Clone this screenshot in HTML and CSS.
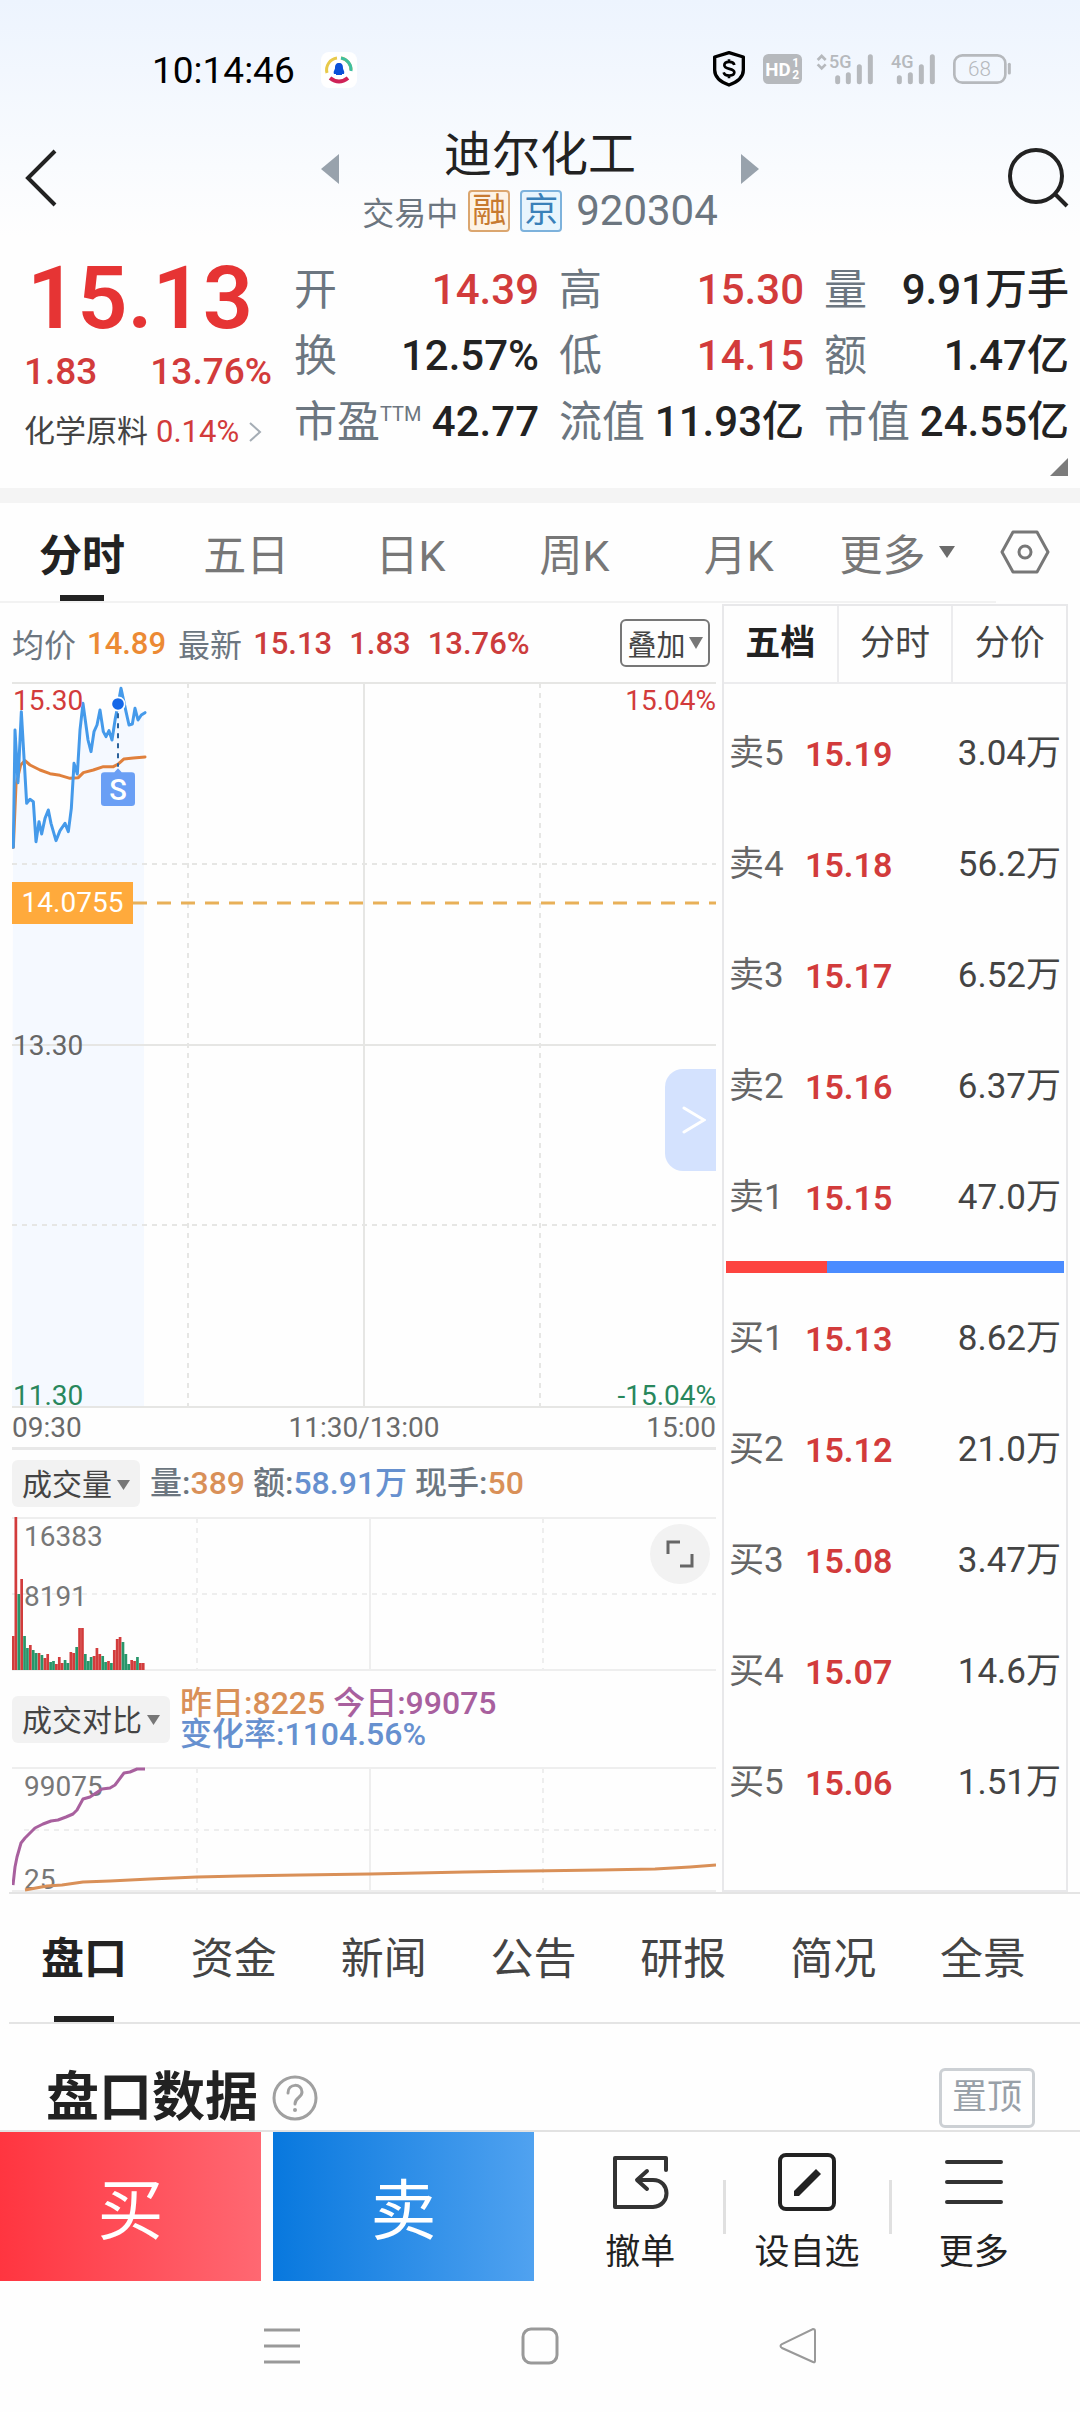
FILE: index.html
```html
<!DOCTYPE html>
<html lang="zh-CN">
<head>
<meta charset="utf-8">
<meta name="viewport" content="width=device-width">
<title>迪尔化工 920304</title>
<link rel="stylesheet" href="styles.css">
</head>
<body>
<div class="top">
  <div class="status">
    <span class="clock">10:14:46</span>
    <svg class="app-dot" viewBox="0 0 36 36" width="36" height="36">
      <rect width="36" height="36" rx="8" fill="#fff"/>
      <path d="M6 21A12 12 0 0 1 16 6M20 6A12 12 0 0 1 30 18" fill="none" stroke="#e8c94a" stroke-width="3"/>
      <path d="M20 6A12 12 0 0 1 30 19" fill="none" stroke="#3fbf9f" stroke-width="3"/>
      <path d="M9 26Q18 33 27 26" fill="none" stroke="#cf2257" stroke-width="4"/>
      <path d="M18 11c3 0 4 2 4 5c0 2 2 3 1 6h-2v1h-6v-1h-2c-1-3 1-4 1-6c0-3 1-5 4-5z" fill="#0a50d8"/>
    </svg>
    <svg class="signals" viewBox="0 0 990 180" width="330" height="60">
      <path d="M117 38L160 51V90C160 112 142 126 117 135C92 126 74 112 74 90V51Z" fill="none" stroke="#000" stroke-width="10" stroke-linejoin="round"/>
      <path d="M133 75C130 62 103 63 103 76C103 90 133 83 133 97C133 110 104 110 101 97M117 58V67M117 106V115" fill="none" stroke="#000" stroke-width="8"/>
      <rect x="219" y="42" width="117" height="90" rx="16" fill="#b6b9bd"/>
      <text x="226" y="108" class="hd">HD</text>
      <text x="307" y="80" class="hd-n">1</text>
      <text x="307" y="118" class="hd-n">2</text>
      <path d="M383 60L395 48L407 60M383 73L395 85L407 73" fill="none" stroke="#b6b9bd" stroke-width="8"/>
      <text x="417" y="85" class="net">5G</text>
      <text x="603" y="85" class="net">4G</text>
      <g stroke="#b6b9bd" stroke-width="15" stroke-linecap="round">
        <path d="M443 113V125M475 104V125M508 80V125M541 50V125M628 113V125M661 104V125M694 80V125M727 50V125"/>
      </g>
      <rect x="793" y="46" width="153" height="82" rx="24" fill="none" stroke="#b6b9bd" stroke-width="8"/>
      <path d="M958 73V99" stroke="#b6b9bd" stroke-width="9" stroke-linecap="round"/>
      <text x="834" y="107" class="bat">68</text>
    </svg>
  </div>
  <header class="head">
    <button class="icon-btn" aria-label="返回"><svg viewBox="0 0 34 60" width="34" height="60"><path d="M31 3L4 30L31 57" fill="none" stroke="#222" stroke-width="4"/></svg></button>
    <div class="switcher">
      <button class="icon-btn" aria-label="上一只"><svg viewBox="0 0 18 30" width="18" height="30"><path d="M18 0V30L0 15Z" fill="#98a2ac"/></svg></button>
      <div class="names">
        <h1>迪尔化工</h1>
        <div class="sub"><span class="state">交易中</span><span class="badge rong">融</span><span class="badge jing">京</span><span class="code">920304</span></div>
      </div>
      <button class="icon-btn" aria-label="下一只"><svg viewBox="0 0 18 30" width="18" height="30"><path d="M0 0V30L18 15Z" fill="#98a2ac"/></svg></button>
    </div>
    <button class="icon-btn" aria-label="搜索"><svg viewBox="0 0 62 60" width="62" height="60"><circle cx="28" cy="28" r="26" fill="none" stroke="#222" stroke-width="4"/><path d="M47 46L59 58" stroke="#222" stroke-width="4"/></svg></button>
  </header>
</div>

<section class="quote">
  <div class="last">
    <div class="price">15.13</div>
    <div class="change"><span>1.83</span><span>13.76%</span></div>
    <a class="sector" href="#sector">化学原料 <span class="up">0.14%</span><svg viewBox="0 0 16 20" width="16" height="20"><path d="M3 1L13 10L3 19" fill="none" stroke="#a5adb5" stroke-width="2"/></svg></a>
  </div>
  <dl class="stats">
    <div><dt>开</dt><dd class="up">14.39</dd></div>
    <div><dt>高</dt><dd class="up">15.30</dd></div>
    <div><dt>量</dt><dd>9.91万手</dd></div>
    <div><dt>换</dt><dd>12.57%</dd></div>
    <div><dt>低</dt><dd class="up">14.15</dd></div>
    <div><dt>额</dt><dd>1.47亿</dd></div>
    <div><dt>市盈<sup>TTM</sup></dt><dd>42.77</dd></div>
    <div><dt>流值</dt><dd>11.93亿</dd></div>
    <div><dt>市值</dt><dd>24.55亿</dd></div>
  </dl>
  <svg class="fold" viewBox="0 0 18 18" width="18" height="18"><path d="M18 0V18H0Z" fill="#7b7b7b"/></svg>
</section>

<nav class="periods">
  <button class="on">分时</button><button>五日</button><button>日K</button><button>周K</button><button>月K</button>
  <button class="more">更多<svg viewBox="0 0 16 12" width="16" height="12"><path d="M0 0H16L8 12Z" fill="#6b6b6b"/></svg></button>
  <button class="gear" aria-label="设置"><svg viewBox="0 0 50 44" width="50" height="44"><path d="M13 2H37L48 22L37 42H13L2 22Z" fill="none" stroke="#777" stroke-width="3" stroke-linejoin="round"/><circle cx="25" cy="22" r="6" fill="none" stroke="#777" stroke-width="3"/></svg></button>
</nav>

<main class="board">
  <div class="charts">
    <div class="info">
      <span class="lbl">均价</span><span class="num avg">14.89</span><span class="lbl">最新</span><span class="num">15.13</span><span class="num">1.83</span><span class="num">13.76%</span>
      <button class="overlay">叠加<svg viewBox="0 0 14 12" width="14" height="12"><path d="M0 0H14L7 12Z" fill="#777"/></svg></button>
    </div>
    <div class="plot">
      <svg viewBox="0 0 704 726">
        <path d="M1 165L3 48L6 101L9 30L15 121L21 120L24 160L30 140L36 128L44 158L53 142L57 148L62 82L66 92L71 21L76 60L79 69L88 28L94 55L100 58L104 36L109 6L114 30L120 42L125 26L132 30V725H0Z" fill="#f5f9ff"/>
        <g stroke="#e6e6e4" stroke-width="2" fill="none">
          <path d="M0 1H704M0 363H704M0 725H704M352 1V725"/>
          <path d="M0 182H704M0 543H704M176 1V725M528 1V725" stroke-dasharray="5 5"/>
        </g>
        <path d="M121 221H704" stroke="#e8b058" stroke-width="3" stroke-dasharray="14 10"/>
        <g transform="translate(-12 -12) scale(.33333)" fill="none" stroke-width="9" stroke-linejoin="round" stroke-linecap="round">
          <path stroke="#e0803c" d="M40 532L48 345L62 285L75 272L90 285L120 300L150 311L180 316L210 325L235 323L250 308L280 300L310 290L340 290L355 282L372 267L400 264L435 261"/>
          <path stroke="#459aea" d="M40 532L45 180L54 338L64 125L80 400L90 388L100 395L108 515L117 455L125 492L135 445L145 420L153 460L168 512L180 482L195 460L205 485L214 415L222 280L232 312L240 180L249 100L264 210L273 245L282 185L291 165L300 120L310 185L318 200L327 182L336 210L346 145L354 105L363 55L378 125L387 165L397 162L405 115L414 150L424 135L435 128"/>
          <path d="M354 130V290" stroke="#2a629c" stroke-width="6" stroke-dasharray="15 15" stroke-linecap="butt"/>
          <circle cx="354" cy="102" r="20" fill="#1668e8" stroke="#fff" stroke-width="5"/>
          <path d="M343 307L354 295L365 307H395Q405 307 405 317V398Q405 408 395 408H313Q303 408 303 398V317Q303 307 313 307Z" fill="#6a9ff5" stroke="none"/>
        </g>
        <text x="106" y="118" class="mark">S</text>
      </svg>
      <span class="ax tl up">15.30</span>
      <span class="ax tr up">15.04%</span>
      <span class="ax base">14.0755</span>
      <span class="ax mid">13.30</span>
      <span class="ax bl down">11.30</span>
      <span class="ax br down">-15.04%</span>
      <button class="drawer" aria-label="收起"><svg viewBox="0 0 24 30" width="24" height="30"><path d="M2 3L22 15L2 27" fill="none" stroke="#fff" stroke-width="3" stroke-linecap="round"/></svg></button>
    </div>
    <div class="times"><span>09:30</span><span>11:30/13:00</span><span>15:00</span></div>
    <div class="ind">
      <button class="pick">成交量<svg viewBox="0 0 13 10" width="13" height="10"><path d="M0 0H13L6.500 10Z" fill="#777"/></svg></button>
      <p>量:<b class="o">389</b> 额:<b class="b">58.91万</b> 现手:<b class="o">50</b></p>
    </div>
    <div class="plot">
      <svg viewBox="0 0 704 154">
        <g stroke="#eeeeee" stroke-width="2" fill="none">
          <path d="M0 1H704M0 153H704M358 1V153"/>
          <path d="M0 77H704M185 1V153M531 1V153" stroke-dasharray="5 5"/>
        </g>
        <g stroke-width="2.800" transform="scale(.965 1)">
          <path stroke="#d23c3c" d="M1 153v-34M4 153V0M10 153v-91M19 153v-25M28 153v-17M34 153v-12M37 153v-16M46 153v-6M49 153v-13M52 153v-7M61 153v-18M64 153v-17M70 153v-42M73 153v-42M85 153v-14M88 153v-22M91 153v-16M100 153v-9M106 153v-20M109 153v-31M112 153v-33M124 153v-10M127 153v-9M133 153v-7M136 153v-7"/>
          <path stroke="#28966a" d="M7 153v-76M13 153v-34M16 153v-22M22 153v-20M25 153v-17M31 153v-15M40 153v-8M43 153v-9M55 153v-10M58 153v-7M67 153v-23M76 153v-16M79 153v-9M82 153v-13M94 153v-14M97 153v-8M103 153v-7M115 153v-28M118 153v-16M121 153v-6M130 153v-13"/>
        </g>
      </svg>
      <span class="ax v1">16383</span>
      <span class="ax v2">8191</span>
      <button class="expand" aria-label="全屏"><svg viewBox="0 0 28 28" width="28" height="28"><path d="M2 14V2H14M26 14V26H14" fill="none" stroke="#666" stroke-width="3"/></svg></button>
    </div>
    <div class="ind cmp">
      <button class="pick">成交对比<svg viewBox="0 0 13 10" width="13" height="10"><path d="M0 0H13L6.500 10Z" fill="#777"/></svg></button>
      <p><b class="o">昨日:8225</b> <b class="p">今日:99075</b><br><b class="b">变化率:1104.56%</b></p>
    </div>
    <div class="plot">
      <span class="ax c1">99075</span>
      <span class="ax c2">25</span>
      <svg class="over" viewBox="0 0 704 125">
        <g stroke="#eeeeee" stroke-width="2" fill="none">
          <path d="M0 1H704M0 124H704M358 1V124"/>
          <path d="M12 63H704M185 1V124M531 1V124" stroke-dasharray="5 5"/>
        </g>
        <g fill="none" stroke-width="3" stroke-linejoin="round">
          <path stroke="#a8609e" d="M1 118L3 100L5 90L9 76L13 71L23 61L31 57L39 54L46 53L54 50L61 47L65 43L71 32L78 30L90 22L98 21L103 18L112 6L118 5L125 2H133"/>
          <path stroke="#d99058" d="M13 123L35 119L50 118L71 115L98 114L138 112L185 110L228 109L288 108L358 107L453 105L518 104L588 103L643 102L678 100L704 98"/>
        </g>
      </svg>
    </div>
  </div>

  <aside class="book">
    <div class="book-tabs"><button class="on">五档</button><button>分时</button><button>分价</button></div>
    <table>
      <tr><th>卖5</th><td class="px">15.19</td><td>3.04万</td></tr>
      <tr><th>卖4</th><td class="px">15.18</td><td>56.2万</td></tr>
      <tr><th>卖3</th><td class="px">15.17</td><td>6.52万</td></tr>
      <tr><th>卖2</th><td class="px">15.16</td><td>6.37万</td></tr>
      <tr><th>卖1</th><td class="px">15.15</td><td>47.0万</td></tr>
    </table>
    <div class="ratio"><i style="width:30%"></i></div>
    <table>
      <tr><th>买1</th><td class="px">15.13</td><td>8.62万</td></tr>
      <tr><th>买2</th><td class="px">15.12</td><td>21.0万</td></tr>
      <tr><th>买3</th><td class="px">15.08</td><td>3.47万</td></tr>
      <tr><th>买4</th><td class="px">15.07</td><td>14.6万</td></tr>
      <tr><th>买5</th><td class="px">15.06</td><td>1.51万</td></tr>
    </table>
  </aside>
</main>

<nav class="sections">
  <button class="on">盘口</button><button>资金</button><button>新闻</button><button>公告</button><button>研报</button><button>简况</button><button>全景</button>
</nav>

<section class="data">
  <h2>盘口数据</h2>
  <button class="icon-btn" aria-label="说明"><svg viewBox="0 0 46 46" width="46" height="46"><circle cx="23" cy="23" r="21" fill="none" stroke="#a0a0a0" stroke-width="3"/><path d="M16 18C16 8 30 8 30 17C30 23 23 22 23 29" fill="none" stroke="#a0a0a0" stroke-width="3" stroke-linecap="round"/><circle cx="23" cy="35" r="2" fill="#a0a0a0"/></svg></button>
  <button class="pin">置顶</button>
</section>

<footer class="trade">
  <button class="buy">买</button>
  <button class="sell">卖</button>
  <div class="tools">
    <button><svg viewBox="0 0 60 60" width="60" height="60"><path d="M56 18V6H5V55H43C61 54 61 28 43 28H28M37 19L27 28L37 37" fill="none" stroke="#333" stroke-width="4" stroke-linecap="round" stroke-linejoin="round"/></svg>撤单</button>
    <button><svg viewBox="0 0 60 60" width="60" height="60"><rect x="3" y="3" width="54" height="54" rx="6" fill="none" stroke="#222" stroke-width="4"/><path d="M17 39L39 17L44 22L22 44H17Z" fill="#222"/></svg>设自选</button>
    <button><svg viewBox="0 0 60 60" width="60" height="60"><path d="M3 10H57M3 30H57M3 50H57" stroke="#333" stroke-width="4" stroke-linecap="round"/></svg>更多</button>
  </div>
</footer>

<div class="sysnav">
  <button class="icon-btn" aria-label="任务"><svg viewBox="0 0 38 38" width="38" height="38"><path d="M1 3H37M1 19H37M1 35H37" stroke="#999" stroke-width="3"/></svg></button>
  <button class="icon-btn" aria-label="主页"><svg viewBox="0 0 38 38" width="38" height="38"><rect x="2" y="2" width="34" height="34" rx="8" fill="none" stroke="#999" stroke-width="3"/></svg></button>
  <button class="icon-btn" aria-label="后退"><svg viewBox="0 0 38 38" width="38" height="38"><path d="M34 2Q36 2 36 4V34Q36 36 34 35L3 21Q0 19 3 17Z" fill="none" stroke="#999" stroke-width="2"/></svg></button>
</div>
</body>
</html>
```
FILE: styles.css
```css
* { box-sizing: border-box; }
body {
  margin: 0;
  background: #fefefe;
  color: #222;
  font-family: Roboto, "Noto Sans CJK SC", sans-serif;
}
button {
  margin: 0;
  padding: 0;
  border: 0;
  background: none;
  color: inherit;
  font: inherit;
}
svg { display: block; flex: none; }
h1, h2, p, dl, dd { margin: 0; }
.up { color: #d23b3b; }
.down { color: #28875c; }

.top { background: linear-gradient(#edf4fe, #fefefe); }
.status {
  display: flex;
  align-items: center;
  height: 110px;
  padding: 30px 60px 0 152px;
}
.clock { font-size: 37px; color: #000; }
.app-dot { margin-left: 26px; }
.signals { margin-left: auto; }
.hd { font: 700 56px Roboto, sans-serif; fill: #fff; }
.hd-n { font: 700 36px Roboto, sans-serif; fill: #fff; }
.net { font: 500 54px Roboto, sans-serif; fill: #b6b9bd; }
.bat { font: 300 62px Roboto, sans-serif; fill: #b6b9bd; }

.head {
  display: flex;
  align-items: center;
  justify-content: space-between;
  height: 127px;
  padding: 8px 10px 0 24px;
}
.switcher {
  display: flex;
  align-items: center;
  justify-content: space-between;
  width: 452px;
  padding: 6px 0 0 14px;
}
.switcher .icon-btn { padding-bottom: 24px; }
.names { text-align: center; }
h1 { font-size: 48px; line-height: 60px; font-weight: 400; }
.sub {
  display: flex;
  align-items: center;
  gap: 10px;
  height: 52px;
  color: #6c7680;
}
.state { font-size: 32px; }
.badge {
  width: 42px;
  height: 42px;
  border: 2px solid;
  border-radius: 4px;
  font-size: 34px;
  line-height: 36px;
}
.rong { color: #c77a30; border-color: #dba66f; background: #fdf3e6; }
.jing { color: #3a80b8; border-color: #7db2dc; background: #e8f5fd; }
.code { font-size: 42px; padding-left: 4px; }

.quote {
  position: relative;
  display: flex;
  padding: 11px 11px 20px 24px;
  border-bottom: 15px solid #f4f4f4;
}
.last { width: 270px; }
.price {
  padding-left: 3px;
  font-size: 88px;
  line-height: 100px;
  font-weight: 600;
  color: #e63434;
}
.change {
  display: flex;
  justify-content: space-between;
  padding-right: 22px;
  font-size: 37px;
  line-height: 48px;
  font-weight: 500;
  color: #d23b3b;
}
.sector {
  display: flex;
  align-items: center;
  gap: 8px;
  font-size: 31px;
  line-height: 72px;
  color: #444;
  text-decoration: none;
}
.stats {
  flex: 1;
  display: grid;
  grid-template-columns: repeat(3, 1fr);
  column-gap: 20px;
  grid-auto-rows: 66px;
  padding-top: 9px;
}
.stats div {
  display: flex;
  justify-content: space-between;
  font-size: 43px;
  line-height: 66px;
  white-space: nowrap;
}
.stats dt { color: #6c7680; }
.stats dd { font-weight: 500; font-size: 42px; }
.stats sup { font-size: 20px; line-height: 0; vertical-align: 16px; }
.fold { position: absolute; right: 12px; bottom: 12px; }

.periods {
  display: flex;
  height: 100px;
  margin-right: 84px;
  border-bottom: 2px solid #f2f2f2;
  font-size: 43px;
  color: #777;
}
.periods button { position: relative; flex: 164; }
.periods .on, .sections .on { color: #222; font-weight: 700; }
.periods .on::after, .sections .on::after {
  content: "";
  position: absolute;
  left: 50%;
  bottom: 0;
  width: 44px;
  height: 6px;
  margin-left: -22px;
  background: #222;
}
.periods .more {
  flex: 153;
  display: flex;
  align-items: center;
  justify-content: center;
  gap: 14px;
}
.periods .gear { flex: none; width: 50px; margin: 0 -54px 0 26px; }

.board {
  display: grid;
  grid-template-columns: 704fr 346fr;
  gap: 6px;
  padding: 1px 12px 0;
  align-items: start;
}
.info {
  display: flex;
  align-items: center;
  height: 78px;
  padding-right: 6px;
  font-size: 32px;
}
.lbl { color: #6c7680; }
.num { margin: 0 6px 0 11px; font-size: 31px; font-weight: 500; color: #cc3c3c; }
.avg { margin-right: 12px; color: #ec8a34; }
.overlay {
  display: flex;
  align-items: center;
  justify-content: center;
  gap: 3px;
  width: 90px;
  height: 48px;
  margin-left: auto;
  border: 2px solid #777;
  border-radius: 6px;
  font-size: 29px;
  color: #444;
}
.plot { position: relative; }
.plot > svg { width: 100%; height: auto; }
.plot > .over { position: relative; }
.mark { font: 500 29px Roboto, sans-serif; fill: #fff; text-anchor: middle; }
.ax { position: absolute; font-size: 28px; line-height: 34px; }
.tl { left: 1px; top: 2px; }
.tr { right: 0; top: 2px; }
.base {
  left: 0;
  top: 200px;
  width: 121px;
  background: #ffaa3c;
  color: #fff;
  line-height: 42px;
  text-align: center;
}
.mid { left: 1px; top: 347px; color: #666; }
.bl { left: 1px; bottom: -5px; }
.br { right: 0; bottom: -5px; }
.v1, .v2, .c1, .c2 { left: 12px; color: #777; }
.v1 { top: 3px; }
.v2 { top: 63px; }
.c1 { top: 3px; }
.c2 { bottom: -5px; }
.drawer {
  position: absolute;
  right: 0;
  top: 387px;
  width: 51px;
  height: 102px;
  padding-left: 17px;
  border-radius: 18px 0 0 18px;
  background: #d4e2fe;
}
.expand {
  position: absolute;
  right: 6px;
  top: 7px;
  width: 60px;
  height: 60px;
  padding: 16px;
  border-radius: 50%;
  background: #f2f2f2;
}
.times {
  display: flex;
  justify-content: space-between;
  height: 42px;
  border-bottom: 3px solid #e8e8e8;
  font-size: 28px;
  line-height: 40px;
  color: #6a6a6a;
}
.ind {
  display: flex;
  align-items: center;
  gap: 10px;
  height: 67px;
}
.ind p { font-size: 32px; line-height: 31px; font-weight: 500; color: #6c7680; }
.ind b { font-weight: 500; }
.o { color: #d99058; }
.b { color: #6690cf; }
.p { color: #a8609e; }
.pick {
  display: flex;
  align-items: center;
  gap: 5px;
  height: 47px;
  padding: 0 10px 3px;
  border-radius: 6px;
  background: #f2f2f2;
  font-size: 30px;
  color: #444;
}
.pick svg { margin-top: 5px; }
.cmp { height: 96px; }

.book {
  height: 100%;
  padding-bottom: 40px;
  border: 2px solid #e8e8ea;
  font-size: 35px;
  line-height: 40px;
  color: #444;
}
.book-tabs { display: flex; height: 78px; border-bottom: 2px solid #ececee; }
.book-tabs button { flex: 1; border-left: 2px solid #ececee; }
.book-tabs button:first-child { border-left: 0; }
.book-tabs .on { font-weight: 700; color: #222; }
.book table { width: 100%; border-collapse: collapse; margin-top: 14px; }
.book tr { height: 111px; }
.book th, .book td { padding: 0 5px; font-weight: 400; text-align: right; white-space: nowrap; }
.book th { width: 76px; text-align: left; color: #666; }
.book .px { width: 98px; font-size: 34px; font-weight: 600; color: #d23b3b; text-align: left; }
.ratio { height: 12px; margin: 8px 2px 0; background: #4b8cff; }
.ratio i { display: block; height: 100%; background: #fd4440; }
.ratio + table { margin-top: 10px; }

.sections {
  display: flex;
  height: 132px;
  margin-left: 9px;
  padding-right: 22px;
  border: solid #e4e4e4;
  border-width: 2px 0;
  font-size: 43px;
  color: #444;
}
.sections button { position: relative; flex: 1; padding-bottom: 6px; }
.sections .on::after { width: 60px; margin-left: -30px; }

.data {
  display: flex;
  align-items: center;
  height: 106px;
  padding: 42px 45px 0 46px;
}
h2 { font-size: 53px; line-height: 60px; font-weight: 700; }
.data .icon-btn { margin-left: 14px; }
.pin {
  width: 96px;
  height: 60px;
  margin-left: auto;
  border: 3px solid #ccd0d4;
  border-radius: 6px;
  font-size: 35px;
  line-height: 50px;
  color: #98a0a8;
}
.trade {
  display: grid;
  grid-template-columns: 261fr 261fr 534fr;
  gap: 12px;
  height: 151px;
  border-top: 2px solid #e2e2e2;
}
.buy, .sell { padding-bottom: 4px; font-size: 66px; color: #fff; }
.buy { background: linear-gradient(90deg, #ff3540, #ff6872); }
.sell { background: linear-gradient(90deg, #0878de, #50a2f0); }
.tools { display: flex; padding: 0 23px 0 11px; font-size: 35px; }
.tools button {
  position: relative;
  flex: 1;
  display: flex;
  flex-direction: column;
  align-items: center;
  gap: 16px;
  padding-top: 20px;
  line-height: 50px;
}
.tools button + button::before {
  content: "";
  position: absolute;
  left: -1px;
  top: 48px;
  width: 3px;
  height: 54px;
  background: #e0e0e0;
}
.sysnav {
  display: flex;
  justify-content: center;
  gap: 220px;
  padding: 46px 0;
}
```
